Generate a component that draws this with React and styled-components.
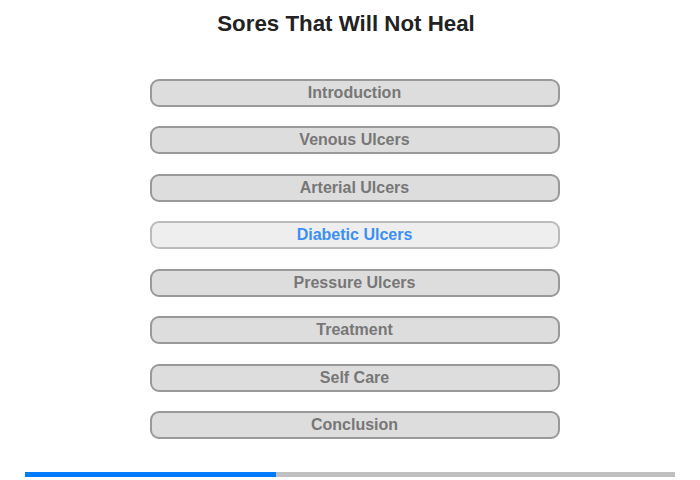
import React from "react";
import styled, { createGlobalStyle } from "styled-components";

const Global = createGlobalStyle`
  html, body { margin: 0; padding: 0; background: #fff; }
  body { font-family: "Liberation Sans", Arial, sans-serif; }
`;

const Page = styled.div`
  width: 700px;
  height: 480px;
  display: flex;
  flex-direction: column;
  align-items: center;
  box-sizing: border-box;
  padding-top: 11px;
`;

const Title = styled.h1`
  margin: 0 8px 0 0;
  font-size: 22.3px;
  line-height: 26px;
  font-weight: bold;
  color: #222;
`;

const Menu = styled.nav`
  margin: 42px 0 0 9px;
  display: flex;
  flex-direction: column;
  gap: 19.43px;
`;

const Item = styled.div`
  width: 410px;
  height: 28px;
  box-sizing: border-box;
  border: 2px solid ${(p) => (p.$active ? "#bbb" : "#999")};
  border-radius: 9px;
  background: ${(p) => (p.$active ? "#eee" : "#ddd")};
  color: ${(p) => (p.$active ? "#3b8ff5" : "#777")};
  font-size: 16px;
  font-weight: bold;
  display: flex;
  align-items: center;
  justify-content: center;
  line-height: 1;
`;

const Progress = styled.div`
  margin-top: 33px;
  width: 650px;
  height: 5px;
  background: #c0c0c0;
  display: flex;
`;

const Fill = styled.div`
  height: 100%;
  background: #007bff;
`;

const items = [
  "Introduction",
  "Venous Ulcers",
  "Arterial Ulcers",
  "Diabetic Ulcers",
  "Pressure Ulcers",
  "Treatment",
  "Self Care",
  "Conclusion",
];

export default function App() {
  return (
    <>
      <Global />
      <Page>
        <Title>Sores That Will Not Heal</Title>
        <Menu>
          {items.map((t, i) => (
            <Item key={t} $active={i === 3}>
              {t}
            </Item>
          ))}
        </Menu>
        <Progress>
          <Fill style={{ width: `${(251 / 650) * 100}%` }} />
        </Progress>
      </Page>
    </>
  );
}
